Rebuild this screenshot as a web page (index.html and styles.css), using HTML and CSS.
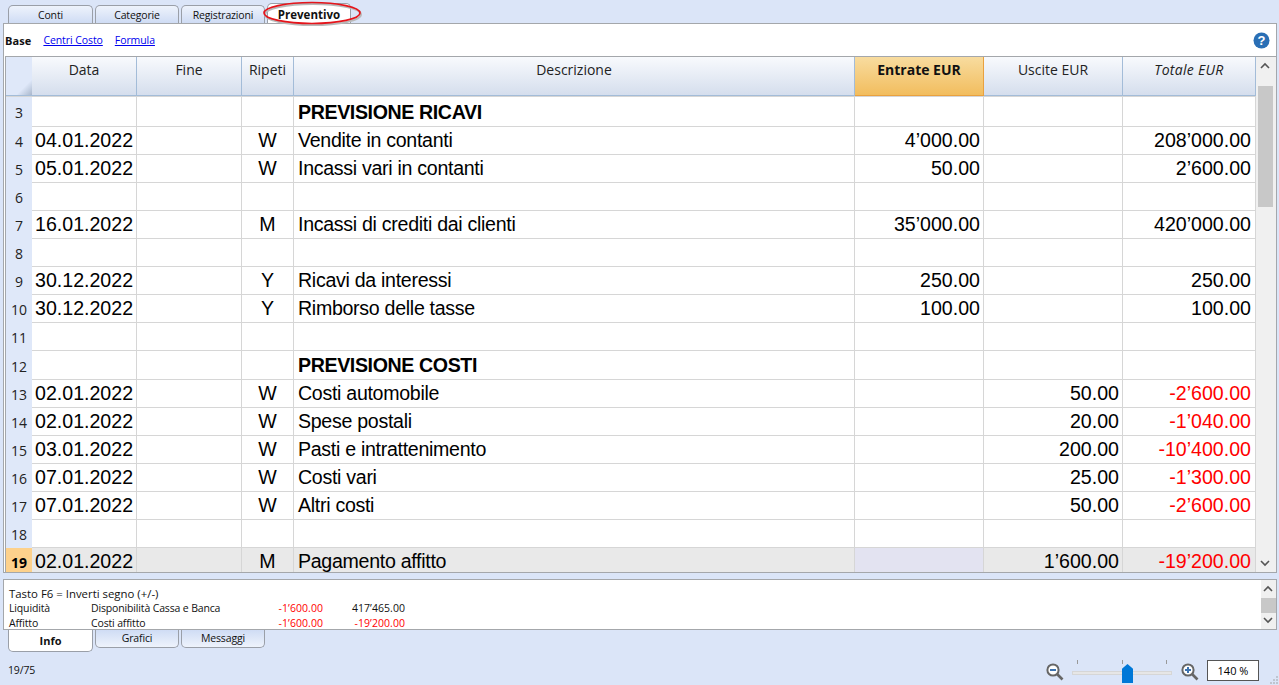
FILE: index.html
```html
<!DOCTYPE html>
<html>
<head>
<title>Preventivo</title>
<meta charset="utf-8" />
<link rel="stylesheet" href="styles.css">
</head>
<body>
<div class="tabs top">
  <div class="tab">Conti</div>
  <div class="tab">Categorie</div>
  <div class="tab">Registrazioni</div>
  <div class="tab on">Preventivo
    <svg class="ring" width="100" height="26" viewBox="0 0 100 26"><ellipse cx="50" cy="13.5" rx="48" ry="10.5" fill="none" stroke="#b9b9b9" stroke-width="2" transform="translate(1 1)"/><ellipse cx="50" cy="13" rx="48" ry="10.5" fill="none" stroke="#e5141b" stroke-width="1.7"/></svg>
  </div>
</div>
<div class="panel">
  <div class="views">
    <span class="view-on">Base</span>
    <a href="#">Centri Costo</a>
    <a href="#">Formula</a>
    <svg class="help" width="17" height="17" viewBox="0 0 17 17"><circle cx="8.5" cy="8.5" r="8" fill="#2a6fb5"/><text x="8.5" y="13" text-anchor="middle" class="help-q">?</text></svg>
  </div>
  <div class="grid-box">
    <div class="grid-clip">
      <table class="grid">
        <colgroup>
          <col class="c-n"><col class="c-d"><col class="c-d"><col class="c-r"><col class="c-t"><col class="c-e"><col class="c-u"><col class="c-o">
        </colgroup>
        <thead>
          <tr>
            <th class="corner"></th><th>Data</th><th>Fine</th><th>Ripeti</th><th>Descrizione</th><th class="hot">Entrate EUR</th><th>Uscite EUR</th><th class="it">Totale EUR</th>
          </tr>
        </thead>
        <tbody>
          <tr class="first"><td class="n">3</td><td></td><td></td><td></td><td class="t h">PREVISIONE RICAVI</td><td></td><td></td><td></td></tr>
          <tr><td class="n">4</td><td>04.01.2022</td><td></td><td class="r">W</td><td class="t">Vendite in contanti</td><td class="m">4’000.00</td><td></td><td class="m">208’000.00</td></tr>
          <tr><td class="n">5</td><td>05.01.2022</td><td></td><td class="r">W</td><td class="t">Incassi vari in contanti</td><td class="m">50.00</td><td></td><td class="m">2’600.00</td></tr>
          <tr><td class="n">6</td><td></td><td></td><td></td><td></td><td></td><td></td><td></td></tr>
          <tr><td class="n">7</td><td>16.01.2022</td><td></td><td class="r">M</td><td class="t">Incassi di crediti dai clienti</td><td class="m">35’000.00</td><td></td><td class="m">420’000.00</td></tr>
          <tr><td class="n">8</td><td></td><td></td><td></td><td></td><td></td><td></td><td></td></tr>
          <tr><td class="n">9</td><td>30.12.2022</td><td></td><td class="r">Y</td><td class="t">Ricavi da interessi</td><td class="m">250.00</td><td></td><td class="m">250.00</td></tr>
          <tr><td class="n">10</td><td>30.12.2022</td><td></td><td class="r">Y</td><td class="t">Rimborso delle tasse</td><td class="m">100.00</td><td></td><td class="m">100.00</td></tr>
          <tr><td class="n">11</td><td></td><td></td><td></td><td></td><td></td><td></td><td></td></tr>
          <tr class="tall"><td class="n">12</td><td></td><td></td><td></td><td class="t h">PREVISIONE COSTI</td><td></td><td></td><td></td></tr>
          <tr><td class="n">13</td><td>02.01.2022</td><td></td><td class="r">W</td><td class="t">Costi automobile</td><td></td><td class="m">50.00</td><td class="m neg">-2’600.00</td></tr>
          <tr><td class="n">14</td><td>02.01.2022</td><td></td><td class="r">W</td><td class="t">Spese postali</td><td></td><td class="m">20.00</td><td class="m neg">-1’040.00</td></tr>
          <tr><td class="n">15</td><td>03.01.2022</td><td></td><td class="r">W</td><td class="t">Pasti e intrattenimento</td><td></td><td class="m">200.00</td><td class="m neg">-10’400.00</td></tr>
          <tr><td class="n">16</td><td>07.01.2022</td><td></td><td class="r">W</td><td class="t">Costi vari</td><td></td><td class="m">25.00</td><td class="m neg">-1’300.00</td></tr>
          <tr><td class="n">17</td><td>07.01.2022</td><td></td><td class="r">W</td><td class="t">Altri costi</td><td></td><td class="m">50.00</td><td class="m neg">-2’600.00</td></tr>
          <tr><td class="n">18</td><td></td><td></td><td></td><td></td><td></td><td></td><td></td></tr>
          <tr class="sel"><td class="n">19</td><td>02.01.2022</td><td></td><td class="r">M</td><td class="t">Pagamento affitto</td><td class="cur"></td><td class="m">1’600.00</td><td class="m neg">-19’200.00</td></tr>
        </tbody>
      </table>
    </div>
    <div class="scroll">
      <svg class="arrow" width="18" height="14" viewBox="0 0 18 14"><path d="M5 9l4-4 4 4" fill="none" stroke="#555" stroke-width="1.6"/></svg>
      <div class="track big"><div class="thumb"></div></div>
      <svg class="arrow" width="18" height="14" viewBox="0 0 18 14"><path d="M5 5l4 4 4-4" fill="none" stroke="#555" stroke-width="1.6"/></svg>
    </div>
  </div>
</div>
<div class="info">
  <div class="info-text">
    <div class="info-head">Tasto F6 = Inverti segno (+/-)</div>
    <div class="info-row"><span>Liquidità</span><span>Disponibilità Cassa e Banca</span><span class="v neg">-1’600.00</span><span class="v">417’465.00</span></div>
    <div class="info-row"><span>Affitto</span><span>Costi affitto</span><span class="v neg">-1’600.00</span><span class="v neg">-19’200.00</span></div>
  </div>
  <div class="scroll small">
    <svg class="arrow" width="18" height="14" viewBox="0 0 18 14"><path d="M5 9l4-4 4 4" fill="none" stroke="#555" stroke-width="1.6"/></svg>
    <div class="track"><div class="thumb"></div></div>
    <svg class="arrow" width="18" height="14" viewBox="0 0 18 14"><path d="M5 5l4 4 4-4" fill="none" stroke="#555" stroke-width="1.6"/></svg>
  </div>
</div>
<div class="tabs bottom">
  <div class="tab on">Info</div>
  <div class="tab">Grafici</div>
  <div class="tab">Messaggi</div>
</div>
<div class="status">
  <span class="pos">19/75</span>
  <svg class="zoom-i" width="18" height="18" viewBox="0 0 18 18"><circle cx="7" cy="7" r="5.6" fill="#fff" stroke="#666" stroke-width="2"/><path d="M11 11l5.5 5.5" stroke="#666" stroke-width="2.6"/><path d="M4 7h6" stroke="#3d73b0" stroke-width="2"/></svg>
  <div class="slider">
    <div class="ticks"><i></i><i></i><i></i></div>
    <div class="rail"></div>
    <div class="knob"></div>
  </div>
  <svg class="zoom-i" width="18" height="18" viewBox="0 0 18 18"><circle cx="7" cy="7" r="5.6" fill="#fff" stroke="#666" stroke-width="2"/><path d="M11 11l5.5 5.5" stroke="#666" stroke-width="2.6"/><path d="M4 7h6M7 4v6" stroke="#3d73b0" stroke-width="2"/></svg>
  <div class="pct">140 %</div>
  <svg class="grip" width="8" height="8" viewBox="0 0 8 8"><path d="M6 0h2v2H6zM3 3h2v2H3zM6 3h2v2H6zM0 6h2v2H0zM3 6h2v2H3zM6 6h2v2H6z" fill="#bfc5cf"/></svg>
</div>
</body>
</html>
```

FILE: styles.css
```css
html, body {
  margin:0;
  padding:0;
}

body {
  width:1279px;
  height:685px;
  overflow:hidden;
  background:#dbe5f8;
  font-family:'Open Sans', sans-serif;
  font-size:10.5px;
  letter-spacing:-0.15px;
  color:#111;
  display:flex;
  flex-direction:column;
}

/* tab strips */
.tabs {
  display:flex;
  gap:2px;
  padding-left:8px;
  flex:none;
}

.tabs.top {
  height:23px;
  align-items:flex-end;
  position:relative;
  z-index:2;
}

.tabs.bottom {
  height:24px;
  align-items:flex-start;
}

.tab {
  width:84px;
  box-sizing:border-box;
  text-align:center;
  border:1px solid #9a9fa8;
  position:relative;
}

.tab:first-child {
  width:85px;
}

.top .tab {
  height:18px;
  line-height:18px;
  border-bottom:0;
  border-radius:5px 5px 0 0;
  background:linear-gradient(#eef3fc, #cfdcf4);
}

.top .tab.on {
  height:20px;
  line-height:21px;
  background:#fff;
  font-weight:bold;
  font-size:11.5px;
  letter-spacing:0;
}

.bottom .tab {
  height:18px;
  line-height:16px;
  border-top:0;
  border-radius:0 0 5px 5px;
  background:linear-gradient(#cfdcf4, #eef3fc);
}

.bottom .tab.on {
  height:22px;
  line-height:21px;
  background:#fff;
  font-weight:bold;
  font-size:11px;
  letter-spacing:0;
}

.ring {
  position:absolute;
  left:-6px;
  top:-4px;
  overflow:visible;
}

/* main panel */
.panel {
  margin-left:3px;
  width:1274px;
  height:550px;
  box-sizing:border-box;
  background:#fff;
  border:1px solid #a4a7ab;
  display:flex;
  flex-direction:column;
  flex:none;
}

.views {
  height:32px;
  flex:none;
  display:flex;
  align-items:center;
  gap:12px;
  padding:0 6px 0 1px;
}

.views a {
  color:#0000ee;
  letter-spacing:-0.08px;
}

.view-on {
  font-weight:bold;
  font-size:11px;
  letter-spacing:0.1px;
}

.help {
  margin-left:auto;
}

.help-q {
  fill:#fff;
  font-family:'Liberation Sans', sans-serif;
  font-weight:bold;
  font-size:13px;
}

.grid-box {
  margin-left:1px;
  flex:1;
  min-height:0;
  display:flex;
  border-top:1px solid #a4a7ab;
  border-left:1px solid #a4a7ab;
}

.grid-clip {
  width:1250px;
  overflow:hidden;
}

.grid {
  table-layout:fixed;
  width:1250px;
  border-collapse:separate;
  border-spacing:0;
  font-family:'Liberation Sans', sans-serif;
  font-size:19.6px;
  letter-spacing:0;
}

.c-n { width:26px; }
.c-d { width:105px; }
.c-r { width:52px; }
.c-t { width:561px; }
.c-e { width:129px; }
.c-u { width:139px; }
.c-o { width:133px; }

.grid th {
  height:39px;
  box-sizing:border-box;
  padding:5px 0 0;
  vertical-align:top;
  font-family:'Open Sans', sans-serif;
  font-size:14px;
  font-weight:normal;
  line-height:16px;
  color:#222;
  background:linear-gradient(#f8fafd, #d5deed);
  border-right:1px solid #a3bcd8;
  border-bottom:1px solid #a3bcd8;
}

.grid th.corner {
  background:linear-gradient(135deg, #dfe8f9 75%, #a9b7cc);
  border-right:0;
}

.grid th.hot {
  font-weight:bold;
  color:#111;
  background:linear-gradient(#f8dc9f, #f2bd5e);
  border-right:1px solid #e9a13f;
  border-bottom:1px solid #e9a13f;
}

.grid th.it {
  font-style:italic;
  letter-spacing:0.3px;
}

.grid td {
  height:28px;
  box-sizing:border-box;
  padding:0 3px;
  border-right:1px solid #d6d6d6;
  border-bottom:1px solid #d6d6d6;
  white-space:nowrap;
  overflow:hidden;
  line-height:23px;
  color:#000;
}

.grid .first td {
  height:31px;
  padding-top:2px;
  border-top:1px solid #d6d6d6;
}

.grid .tall td {
  height:29px;
  padding-top:1px;
}

.grid td.t {
  padding-left:4px;
  letter-spacing:-0.3px;
}

.grid td.h {
  font-weight:bold;
  letter-spacing:-0.38px;
}

.grid td:last-child {
  padding-right:4px;
}

.grid td.n {
  background:#dfe8f9;
  border-right:0;
  border-bottom:0;
  text-align:center;
  padding:1px 0 0;
  font-family:'Open Sans', sans-serif;
  font-size:14px;
  color:#222;
}

.grid td.r {
  text-align:center;
  padding-left:0;
  padding-right:0;
}

.grid td.m {
  text-align:right;
}

.grid .neg {
  color:#f00;
}

.sel td {
  background:#e9e9e9;
}

.grid .sel td.n {
  background:#fdd18c;
  font-weight:bold;
  color:#000;
}

.grid .sel td.cur {
  background:#e3e3f1;
}

/* scrollbars */
.scroll {
  width:20px;
  background:#f0f0f0;
  display:flex;
  flex-direction:column;
  flex:none;
}

.arrow {
  flex:none;
  display:block;
  margin:2px 0;
}

.track {
  flex:1;
  min-height:0;
}

.thumb {
  background:#c8c8c8;
  height:15px;
}

.track.big {
  padding-top:11px;
}

.track.big .thumb {
  height:121px;
  margin:0 3px 0 2px;
}

.scroll.small {
  width:15px;
}

.scroll.small .arrow {
  margin-left:-2px;
}

/* info box under the table */
.info {
  margin:6px 0 0 3px;
  width:1274px;
  height:51px;
  box-sizing:border-box;
  background:#fff;
  border:1px solid #a4a7ab;
  display:flex;
  flex:none;
}

.info-text {
  flex:1;
  padding:6px 5px 0;
  overflow:hidden;
  line-height:15px;
}

.info-head {
  font-size:11.4px;
  letter-spacing:0;
}

.info-row {
  display:grid;
  grid-template-columns:82px 150px 82px 82px;
}

.v {
  text-align:right;
  letter-spacing:0.05px;
}

.neg {
  color:#f00;
}

/* status bar */
.status {
  flex:1;
  display:flex;
  align-items:flex-start;
  padding:6px 20px 0 8px;
  position:relative;
}

.pos {
  margin-right:auto;
  margin-top:3px;
}

.zoom-i {
  margin-top:3px;
}

.slider {
  width:100px;
  height:24px;
  margin:0 9px 0 8px;
  position:relative;
}

.rail {
  position:absolute;
  left:0;
  right:0;
  top:11px;
  height:4px;
  background:#e6e6e6;
  border:1px solid #d6d6d6;
  box-sizing:border-box;
}

.ticks {
  display:flex;
  justify-content:space-between;
  padding:0 5px;
}

.ticks i {
  width:1px;
  height:4px;
  background:#999;
}

.knob {
  position:absolute;
  left:50px;
  top:4px;
  width:11px;
  height:19px;
  background:#0078d7;
  clip-path:polygon(50% 0, 100% 25%, 100% 100%, 0 100%, 0 25%);
}

.pct {
  width:52px;
  height:21px;
  box-sizing:border-box;
  margin-left:8px;
  background:#fff;
  border:1px solid #555;
  text-align:center;
  line-height:19px;
  font-size:11px;
  letter-spacing:0;
  color:#000;
}

.grip {
  position:absolute;
  right:1px;
  bottom:1px;
}
```
